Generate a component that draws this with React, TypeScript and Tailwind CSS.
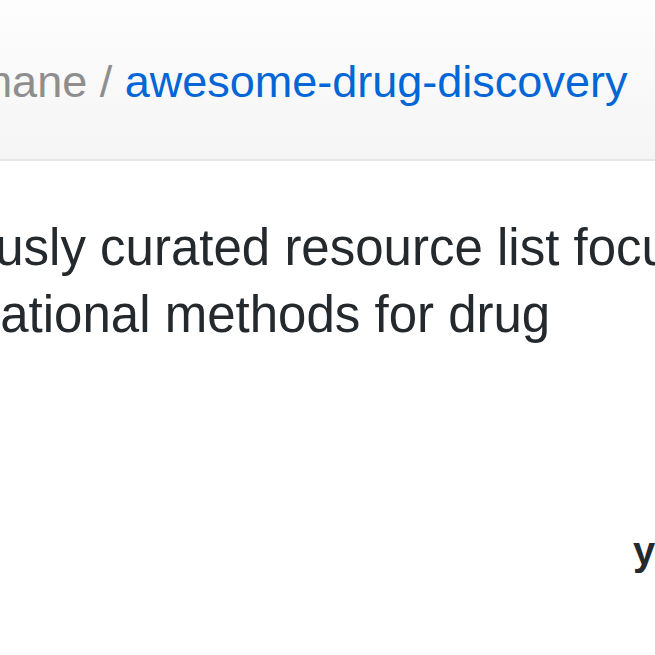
import React from 'react';

const font = { fontFamily: '"Liberation Sans", Arial, sans-serif' };

export default function App() {
    return (
        <div className="w-[655px] h-[655px] overflow-hidden bg-white" style={font}>
            {/* repo header */}
            <div className="h-[161px] bg-gradient-to-b from-[#fdfdfd] to-[#f5f5f5] border-b-2 border-[#e6e6e6] pt-[48px]">
                <h1 className="-ml-[183px] whitespace-nowrap text-[45px] leading-[1.5] font-normal">
                    <span className="text-[#8e8e8e]">yboulaamane</span>
                    <span className="text-[#8e8e8e]"> / </span>
                    <a className="text-[#0366d6]" href="#">awesome-drug-discovery</a>
                </h1>
            </div>

            {/* description */}
            <p className="mt-[53px] -ml-[167px] indent-[12px] whitespace-nowrap text-[51px] leading-[67px] text-[#24292e]">
                Rigorously curated resource list focused on
                <br />
                computational methods for drug
            </p>

            {/* latest commit row */}
            <div className="mt-[180px] pl-[633px] whitespace-nowrap text-[40px] font-bold text-[#24292e] leading-[46px]">
                yboulaamane
            </div>
        </div>
    );
}
